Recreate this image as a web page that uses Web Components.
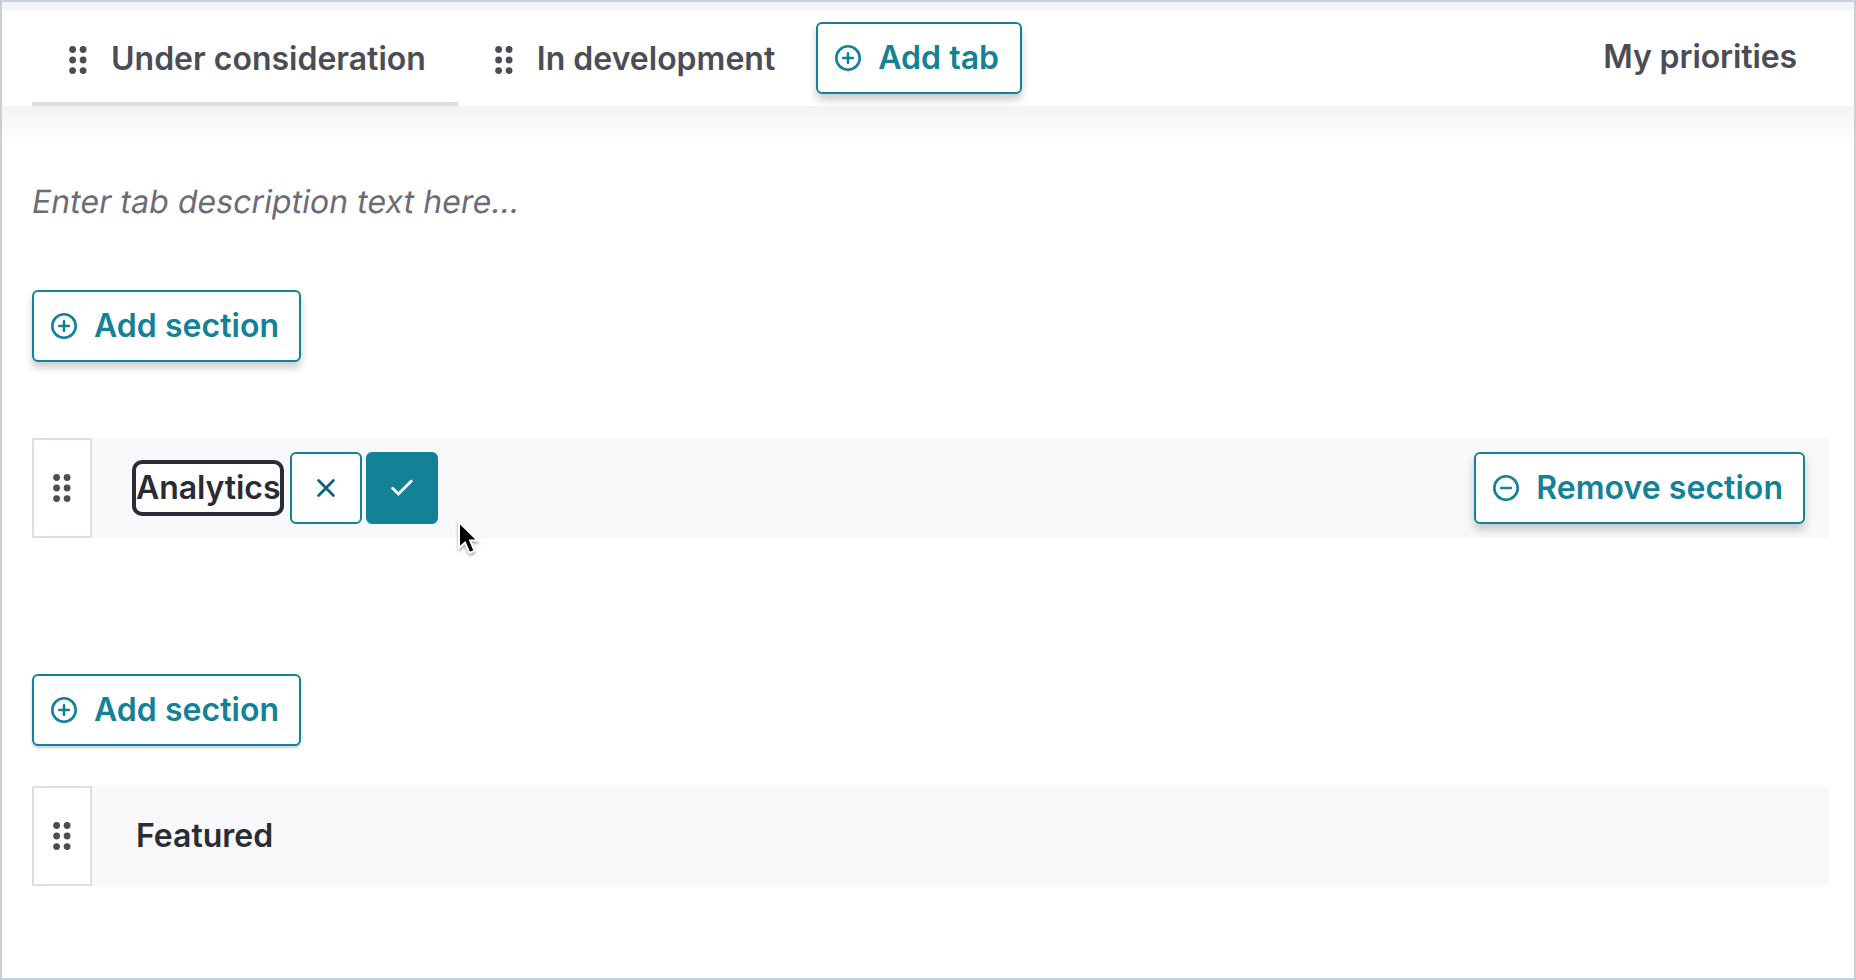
<!DOCTYPE html>
<html lang="en">
<head>
<meta charset="utf-8">
<title>Portal tabs</title>
<style>
    body {
        margin: 0;
        font-family: Inter, "Liberation Sans", sans-serif;
        font-size: 32px;
        font-weight: 600;
        line-height: 40px;
        color: #4c4c57;
        background: #fff;
    }
</style>
</head>
<body>
<portal-editor>
    <portal-tab slot="tabs" active>Under consideration</portal-tab>
    <portal-tab slot="tabs">In development</portal-tab>
    <outline-button slot="tabs" class="add-tab" icon="plus">Add tab</outline-button>
    <span slot="aside">My priorities</span>

    <tab-description>Enter tab description text here...</tab-description>
    <outline-button class="first" icon="plus">Add section</outline-button>
    <section-row editing>
        Analytics
        <outline-button slot="actions" icon="minus">Remove section</outline-button>
    </section-row>
    <outline-button class="second" icon="plus" flat>Add section</outline-button>
    <section-row>Featured</section-row>
</portal-editor>
<mouse-pointer></mouse-pointer>

<script>
(function(){
    function attach(element, html) {
        const template = document.createElement("template");
        template.innerHTML = html;
        const root = element.attachShadow({mode: "open"});
        root.appendChild(template.content.cloneNode(true));
        return root;
    }

    class PortalEditor extends HTMLElement {
        constructor() {
            super();
            attach(this, `
                <style>
                :host {
                    display: flex;
                    flex-direction: column;
                    box-sizing: border-box;
                    height: 980px;
                    border: 2px solid #c3d1db;
                    overflow: hidden;
                }
                header {
                    display: flex;
                    justify-content: space-between;
                    box-sizing: border-box;
                    height: 104px;
                    flex: none;
                    padding: 0 57px 0 30px;
                    border-top: 8px solid #f5f5f9;
                    overflow: hidden;
                }
                nav {
                    display: flex;
                }
                ::slotted(.add-tab) {
                    margin: 12px 0 0 9px;
                    padding-right: 21px !important;
                }
                aside {
                    padding-top: 27px;
                    letter-spacing: -.1px;
                }
                main {
                    display: flex;
                    flex-direction: column;
                    align-items: flex-start;
                    flex: 1;
                    padding: 76px 25px 0 30px;
                    background: linear-gradient(#f2f2f2 0, #f7f7f7 12px, #fbfbfb 24px, #fefefe 36px, #fff 46px);
                }
                ::slotted(.first) {
                    margin: 68px 0 76px;
                }
                ::slotted(.second) {
                    margin: 136px 0 40px;
                }
                </style>
                <header>
                    <nav><slot name="tabs"></slot></nav>
                    <aside><slot name="aside"></slot></aside>
                </header>
                <main><slot></slot></main>
            `);
        }
    }

    class DragHandle extends HTMLElement {
        constructor() {
            super();
            attach(this, `
                <style>
                :host { display: block; width: 18px; height: 28px; color: #4c4c57; }
                svg { display: block; }
                </style>
                <svg width="18" height="28" viewBox="0 0 18 28" fill="currentColor">
                    <circle cx="3.6" cy="3.5" r="3.4"/><circle cx="14.1" cy="3.5" r="3.4"/>
                    <circle cx="3.6" cy="14" r="3.4"/><circle cx="14.1" cy="14" r="3.4"/>
                    <circle cx="3.6" cy="24.6" r="3.4"/><circle cx="14.1" cy="24.6" r="3.4"/>
                </svg>
            `);
        }
    }

    class PortalTab extends HTMLElement {
        constructor() {
            super();
            attach(this, `
                <style>
                :host {
                    display: flex;
                    box-sizing: border-box;
                    height: 96px;
                    padding: 29px 32px 0 37px;
                    gap: 24px;
                    border-bottom: 4px solid transparent;
                    white-space: nowrap;
                }
                :host([active]) { border-bottom-color: #dcdce6; }
                drag-handle { margin-top: 7px; }
                </style>
                <drag-handle></drag-handle>
                <span><slot></slot></span>
            `);
        }
    }

    class OutlineButton extends HTMLElement {
        constructor() {
            super();
            const root = attach(this, `
                <style>
                :host {
                    display: flex;
                    align-items: center;
                    box-sizing: border-box;
                    height: 72px;
                    padding: 0 20px 0 17px;
                    gap: 17px;
                    border: 2px solid #138297;
                    border-radius: 6px;
                    background: #fff;
                    color: #138297;
                    box-shadow: 0 6px 8px rgba(0, 0, 0, .2);
                    letter-spacing: .04px;
                    white-space: nowrap;
                }
                :host([flat]) { box-shadow: 0 2px 3px rgba(0, 0, 0, .2); }
                svg { flex: none; }
                </style>
                <svg width="26" height="26" viewBox="0 0 26 26" fill="none" stroke="currentColor" stroke-width="2.6" stroke-linecap="round">
                    <circle cx="13" cy="13" r="11.7"/>
                    <path id="sign"/>
                </svg>
                <span><slot></slot></span>
            `);
            root.getElementById("sign").setAttribute("d",
                this.getAttribute("icon") === "minus" ? "M8.2 13H17.8" : "M8.2 13H17.8M13 8.2V17.8");
        }
    }

    class TabDescription extends HTMLElement {
        constructor() {
            super();
            // slanted roman: the real italic has a single-storey "a"
            attach(this, `
                <style>
                :host {
                    display: block;
                    font-weight: 400;
                    letter-spacing: .07px;
                    color: #6c6c78;
                    transform: skewX(-9.4deg);
                    transform-origin: 0 22px;
                }
                </style>
                <slot></slot>
            `);
        }
    }

    class InlineEdit extends HTMLElement {
        constructor() {
            super();
            attach(this, `
                <style>
                :host { display: flex; align-items: center; }
                .field {
                    box-sizing: border-box;
                    width: 152px;
                    height: 56px;
                    padding: 4px 0;
                    margin-right: 6px;
                    border: 4px solid #2a2c35;
                    border-radius: 10px;
                    background: #fff;
                    letter-spacing: -.08px;
                }
                .button {
                    display: grid;
                    place-items: center;
                    box-sizing: border-box;
                    width: 72px;
                    height: 72px;
                    border: 2px solid #138297;
                    border-radius: 6px;
                    background: #fff;
                    color: #0b6578;
                }
                .confirm { margin-left: 4px; background: #138297; color: #fff; }
                </style>
                <div class="field"><slot></slot></div>
                <div class="button">
                    <svg width="24" height="24" viewBox="0 0 24 24" fill="none" stroke="currentColor" stroke-width="2.8" stroke-linecap="round"><path d="M4.6 4.6L19.4 19.4M19.4 4.6L4.6 19.4"/></svg>
                </div>
                <div class="button confirm">
                    <svg width="24" height="24" viewBox="0 0 24 24" fill="none" stroke="currentColor" stroke-width="2.8" stroke-linecap="round"><path d="M2.6 12.2L8.4 18L21.3 5.1"/></svg>
                </div>
            `);
        }
    }

    class SectionRow extends HTMLElement {
        constructor() {
            super();
            const title = this.hasAttribute("editing")
                ? `<inline-edit class="title"><slot></slot></inline-edit>`
                : `<div class="title text"><slot></slot></div>`;
            attach(this, `
                <style>
                :host {
                    display: flex;
                    align-items: center;
                    align-self: stretch;
                    box-sizing: border-box;
                    height: 100px;
                    padding-right: 24px;
                    background: #f8f8fb;
                    color: #2a2c35;
                }
                .handle {
                    display: grid;
                    place-items: center;
                    box-sizing: border-box;
                    width: 60px;
                    height: 100px;
                    padding-right: 1px;
                    border: 2px solid #dddce8;
                    background: #fff;
                }
                .title { flex: 1; margin-left: 40px; }
                .text { padding-left: 4px; }
                </style>
                <div class="handle"><drag-handle></drag-handle></div>
                ${title}
                <slot name="actions"></slot>
            `);
        }
    }

    class MousePointer extends HTMLElement {
        constructor() {
            super();
            attach(this, `
                <style>
                :host { position: absolute; left: 456px; top: 518px; }
                svg { display: block; filter: drop-shadow(0 2px 1.5px rgba(0, 0, 0, .35)); }
                </style>
                <svg width="26" height="38" viewBox="0 0 26 38">
                    <path d="M3 4V30L9 24.6L13.4 35L18.5 32.8L14.2 22.6H21.8Z" fill="#000" stroke="#fff" stroke-width="2"/>
                </svg>
            `);
        }
    }

    customElements.define("drag-handle", DragHandle);
    customElements.define("outline-button", OutlineButton);
    customElements.define("portal-tab", PortalTab);
    customElements.define("tab-description", TabDescription);
    customElements.define("inline-edit", InlineEdit);
    customElements.define("section-row", SectionRow);
    customElements.define("portal-editor", PortalEditor);
    customElements.define("mouse-pointer", MousePointer);
})();
</script>
</body>
</html>
